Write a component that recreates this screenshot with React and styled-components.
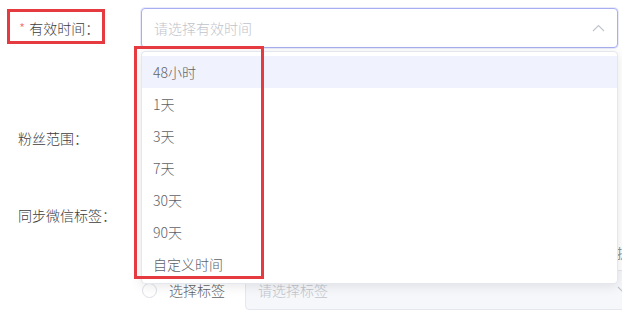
import React from "react";
import styled, { createGlobalStyle } from "styled-components";

const Global = createGlobalStyle`
  html, body { margin: 0; padding: 0; background: #fff; }
  body {
    width: 622px; height: 325px; overflow: hidden;
    font-family: "Noto Sans CJK SC", "Noto Sans", sans-serif;
    font-size: 14px; color: #606266;
  }
  * { box-sizing: border-box; }
`;

const Page = styled.div`
  position: relative;
  width: 622px;
  height: 325px;
  overflow: hidden;
  padding-top: 8px;
`;

const Form = styled.div`
  display: flex;
  flex-direction: column;
`;

const Row = styled.div`
  display: flex;
  align-items: flex-start;
  margin-top: ${(p) => p.$mt || 0}px;
`;

const Label = styled.div`
  width: 141px;
  flex: none;
  height: 40px;
  line-height: 40px;
  padding-left: ${(p) => (p.$required ? 19 : 18)}px;
  color: #3d3d3d;
  font-size: 14px;
  font-weight: 300;
  white-space: nowrap;
`;

const Star = styled.span`
  color: #f56c6c;
  margin-right: 4px;
`;

const Content = styled.div`
  flex: 1;
  display: flex;
  flex-direction: column;
  padding-right: 4px;
`;

const Select = styled.div`
  flex: ${(p) => (p.$grow ? 1 : "none")};
  height: 40px;
  display: flex;
  align-items: center;
  justify-content: space-between;
  padding: 0 12px 0 12px;
  border: 1px solid ${(p) => (p.$focus ? "#a9aef0" : "#e4e7ed")};
  border-radius: 4px;
  background: ${(p) => (p.$disabled ? "#f5f7fa" : "#fff")};
  box-shadow: ${(p) => (p.$focus ? "0 0 0 1px rgba(169,174,240,0.25)" : "none")};
`;

const Placeholder = styled.span`
  color: #c0c4cc;
  font-size: 14px;
  font-weight: 300;
`;

const Line = styled.div`
  height: 40px;
  display: flex;
  align-items: center;
`;

const Hint = styled.div`
  height: 35px;
  line-height: 35px;
  padding-left: 476px;
  white-space: nowrap;
  color: #909399;
  font-size: 13px;
`;

const RadioWrap = styled.label`
  display: flex;
  align-items: center;
  width: 104px;
  flex: none;
  color: #606266;
  font-weight: 300;
`;

const RadioCircle = styled.span`
  width: 15px;
  height: 15px;
  border-radius: 50%;
  border: 1px solid #dcdfe6;
  background: #fff;
  margin-right: 12px;
  margin-left: 1px;
`;

const Dropdown = styled.div`
  position: absolute;
  left: 141px;
  top: 51px;
  width: 477px;
  height: 233px;
  background: #fff;
  border: 1px solid #e4e7ed;
  border-radius: 4px;
  box-shadow: 0 2px 12px rgba(0, 0, 0, 0.1);
  padding: 4px 0;
  z-index: 5;
`;

const Option = styled.div`
  height: 32px;
  line-height: 32px;
  padding-left: 11px;
  color: #606266;
  font-size: 14px;
  font-weight: 300;
  background: ${(p) => (p.$hover ? "#f0f3fd" : "transparent")};
`;

const Mark = styled.div`
  position: absolute;
  left: ${(p) => p.$x}px;
  top: ${(p) => p.$y}px;
  width: ${(p) => p.$w}px;
  height: ${(p) => p.$h}px;
  border: 3px solid #e53a3f;
  z-index: 10;
  pointer-events: none;
`;

const Chevron = ({ up }) => (
  <svg width="13" height="8" viewBox="0 0 13 8" fill="none">
    <path
      d={up ? "M1 7L6.5 1.5L12 7" : "M1 1L6.5 6.5L12 1"}
      stroke="#bfc3cb"
      strokeWidth="1.1"
    />
  </svg>
);

const options = ["48小时", "1天", "3天", "7天", "30天", "90天", "自定义时间"];

export default function App() {
  return (
    <Page>
      <Global />
      <Form>
        <Row>
          <Label $required>
            <Star>*</Star>有效时间：
          </Label>
          <Content>
            <Select $focus>
              <Placeholder>请选择有效时间</Placeholder>
              <Chevron up />
            </Select>
          </Content>
        </Row>
        <Row $mt={70}>
          <Label>粉丝范围：</Label>
          <Content>
            <Line />
          </Content>
        </Row>
        <Row $mt={37}>
          <Label>同步微信标签：</Label>
          <Content>
            <Line />
            <Hint>提示</Hint>
            <Line>
              <RadioWrap>
                <RadioCircle />
                选择标签
              </RadioWrap>
              <Select $disabled $grow>
                <Placeholder>请选择标签</Placeholder>
                <Chevron />
              </Select>
            </Line>
          </Content>
        </Row>
      </Form>
      <Dropdown>
        {options.map((o, i) => (
          <Option key={o} $hover={i === 0}>
            {o}
          </Option>
        ))}
      </Dropdown>
      <Mark $x={7} $y={9} $w={98} $h={35} />
      <Mark $x={134} $y={46} $w={130} $h={233} />
    </Page>
  );
}
